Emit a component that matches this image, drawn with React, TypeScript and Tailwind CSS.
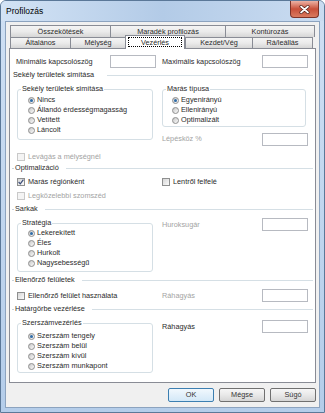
import React from "react";

const Radio = ({ label, checked = false }: { label: string; checked?: boolean }) => (
  <div className="flex h-[10px] items-center">
    <span className="flex h-[7px] w-[7px] shrink-0 items-center justify-center rounded-full border border-[#8e8e8e] bg-linear-to-br from-[#c6c6c6] to-[#fcfcfc]">
      {checked && <span className="h-[3px] w-[3px] rounded-full bg-[#2f6ca8]" />}
    </span>
    <span className="ml-[2px]">{label}</span>
  </div>
);

const Check = ({
  label,
  checked = false,
  disabled = false,
}: {
  label: string;
  checked?: boolean;
  disabled?: boolean;
}) => (
  <div className="flex h-[10px] items-center">
    <span
      className={`flex h-[8px] w-[8px] shrink-0 items-center justify-center border ${
        disabled
          ? "border-[#c9c9c9] bg-[#f4f4f4]"
          : "border-[#8e8f8f] bg-linear-to-br from-[#d6d6d6] to-[#fbfbfb]"
      }`}
    >
      {checked && (
        <svg width="6" height="6" viewBox="0 0 6 6">
          <path d="M0.6 3 L2.3 4.8 L5.4 0.7" fill="none" stroke="#3b4d78" strokeWidth="1.2" />
        </svg>
      )}
    </span>
    <span className={`ml-[3px] ${disabled ? "text-[#a3a3a3]" : ""}`}>{label}</span>
  </div>
);

const Section = ({ title, dash = true, gap = "ml-[6px]" }: { title: string; dash?: boolean; gap?: string }) => (
  <div className="flex h-[10px] items-center">
    {dash && <span className="h-px w-[2px] bg-[#c9d3da]" />}
    <span className="px-[1px]">{title}</span>
    <span className={`${gap} h-px flex-1 bg-[#d5dfe5]`} />
  </div>
);

const Group = ({
  title,
  className,
  inner,
  children,
}: {
  title: string;
  className: string;
  inner: string;
  children: React.ReactNode;
}) => (
  <fieldset className={`rounded-[3px] border border-[#d5dfe5] ${className}`}>
    <legend className="ml-[3px] px-[1px] leading-[10px]">{title}</legend>
    <div className={inner}>{children}</div>
  </fieldset>
);

const Field = () => (
  <input readOnly className="ml-auto block h-[13px] w-[46px] shrink-0 border border-[#b7bac1] bg-white" />
);

const Tab = ({ label, className }: { label: string; className: string }) => (
  <div
    className={`flex items-center justify-center border-l border-t border-[#898c95] bg-linear-to-b from-[#f4f4f4] via-[#ebebeb] to-[#d6d6d6] ${className}`}
  >
    {label}
  </div>
);

const Btn = ({ label, primary = false }: { label: string; primary?: boolean }) => (
  <button
    className={`h-[14px] w-[46px] rounded-[2px] border leading-[12px] text-[#333] ${
      primary
        ? "border-[#3c7fb1] bg-linear-to-b from-[#f1f8fd] to-[#d3e8f7]"
        : "border-[#707070] bg-linear-to-b from-[#f6f6f6] via-[#e9e9e9] to-[#d5d5d5]"
    }`}
  >
    {label}
  </button>
);

export default function App() {
  return (
    <div className="h-[413px] w-[325px] overflow-hidden bg-white">
      <div className="flex h-[413px] w-[325px] flex-col rounded-t-[6px] border border-[#5b7898] bg-linear-to-b from-[#cfe0f4] to-[#b4cdea] font-[family-name:'Liberation_Sans',Arial,sans-serif] text-[7.3px] leading-[10px] text-[#2b2b2b]">
        {/* title bar */}
        <div className="flex h-[20px] shrink-0 rounded-t-[5px] bg-linear-to-r from-[#d3e3f5] via-[#b3cbe7] to-[#cadcf1]">
          <span className="ml-[5px] mt-[5px] text-[8.5px] leading-[11px] text-black">Profilozás</span>
          <button className="ml-auto mr-[5px] flex h-[17px] w-[29px] items-center justify-center rounded-b-[4px] border border-t-0 border-[#7d3328] bg-linear-to-b from-[#ebb2a5] via-[#c84f39] to-[#d97a5f]">
            <svg width="11" height="9" viewBox="0 0 11 9">
              <path d="M2 1.5 L9 7.5 M9 1.5 L2 7.5" stroke="#4a1a12" strokeWidth="3" strokeLinecap="round" />
              <path d="M2 1.5 L9 7.5 M9 1.5 L2 7.5" stroke="#fff" strokeWidth="1.7" strokeLinecap="round" />
            </svg>
          </button>
        </div>

        {/* client */}
        <div className="mx-[4px] flex h-[387px] shrink-0 flex-col border border-[#8ca3bf] bg-[#f0f0f0]">
          <div className="ml-[3px] mt-[3px] w-[307px]">
            <div className="flex h-[12px] pl-[1px]">
              <Tab label="Összekötések" className="w-[100px]" />
              <Tab label="Maradék profilozás" className="w-[115px]" />
              <Tab label="Kontúrozás" className="w-[90px] border-r" />
            </div>
            <div className="flex h-[11px] pl-[1px]">
              <Tab label="Általános" className="w-[60px]" />
              <Tab label="Mélység" className="w-[55px]" />
              <div className="relative z-10 -mb-[1px] -mt-[2px] flex h-[14px] w-[60px] border-x border-t border-[#898c95] bg-white px-[2px] pb-[2px] pt-[1px]">
                <span className="flex flex-1 items-center justify-center border border-dotted border-black leading-[9px]">
                  Vezérlés
                </span>
              </div>
              <Tab label="Kezdet/Vég" className="w-[67px]" />
              <Tab label="Rá/leállás" className="w-[61px] border-r" />
            </div>

            {/* panel */}
            <div className="h-[335px] border border-[#898c95] bg-white px-[2px]">
              <div className="ml-[4px] mt-[6px] grid h-[12px] grid-cols-[140px_146px] gap-x-[6px]">
                <div className="flex items-center">
                  <span>Minimális kapcsolószög</span>
                  <Field />
                </div>
                <div className="flex items-center">
                  <span>Maximális kapcsolószög</span>
                  <Field />
                </div>
              </div>

              <div className="mt-[3px]">
                <Section title="Sekély területek simítása" dash={false} gap="ml-[12px]" />
              </div>

              <div className="ml-[4px] mt-[4px] grid grid-cols-[140px_146px] items-start gap-x-[6px]">
                <Group title="Sekély területek simítása" className="ml-[1px] w-[136px]" inner="pb-[4px] pl-[10px] pt-[1px]">
                  <Radio label="Nincs" checked />
                  <Radio label="Állandó érdességmagasság" />
                  <Radio label="Vetített" />
                  <Radio label="Láncolt" />
                </Group>
                <div>
                  <Group title="Marás típusa" className="w-[144px]" inner="pb-[1px] pl-[9px] pt-[1px]">
                    <Radio label="Egyenirányú" checked />
                    <Radio label="Ellenirányú" />
                    <Radio label="Optimalizált" />
                  </Group>
                  <div className="mt-[6px] flex h-[12px] items-center">
                    <span className="text-[#a3a3a3]">Lépésköz %</span>
                    <Field />
                  </div>
                </div>
              </div>

              <div className="ml-[5px] mt-[7px]">
                <Check label="Levágás a mélységnél" disabled />
              </div>

              <div className="mt-[1px]">
                <Section title="Optimalizáció" />
              </div>

              <div className="ml-[4px] mt-[4px] grid grid-cols-[140px_146px] gap-x-[6px]">
                <div className="ml-[1px]">
                  <Check label="Marás régiónként" checked />
                </div>
                <Check label="Lentről felfelé" />
              </div>

              <div className="ml-[5px] mt-[4px]">
                <Check label="Legközelebbi szomszéd" disabled />
              </div>

              <div className="mt-[3px]">
                <Section title="Sarkak" />
              </div>

              <div className="ml-[4px] mt-[4px] grid grid-cols-[140px_146px] items-start gap-x-[6px]">
                <Group title="Stratégia" className="ml-[1px] w-[136px]" inner="pb-[3px] pl-[10px]">
                  <Radio label="Lekerekített" checked />
                  <Radio label="Éles" />
                  <Radio label="Hurkolt" />
                  <Radio label="Nagysebességű" />
                </Group>
                <div className="flex h-[13px] items-center">
                  <span className="text-[#a3a3a3]">Huroksugár</span>
                  <Field />
                </div>
              </div>

              <div className="mt-[3px]">
                <Section title="Ellenőrző felületek" />
              </div>

              <div className="ml-[4px] mt-[4px] grid h-[13px] grid-cols-[140px_146px] items-center gap-x-[6px]">
                <div className="ml-[1px]">
                  <Check label="Ellenőrző felület használata" />
                </div>
                <div className="flex items-center">
                  <span className="text-[#a3a3a3]">Ráhagyás</span>
                  <Field />
                </div>
              </div>

              <div className="mt-[2px]">
                <Section title="Határgörbe vezérlése" />
              </div>

              <div className="ml-[4px] mt-[4px] grid grid-cols-[140px_146px] items-start gap-x-[6px]">
                <Group title="Szerszámvezérlés" className="ml-[1px] w-[136px]" inner="pb-[1px] pl-[10px] pt-[3px]">
                  <Radio label="Szerszám tengely" checked />
                  <Radio label="Szerszám belül" />
                  <Radio label="Szerszám kívül" />
                  <Radio label="Szerszám munkapont" />
                </Group>
                <div className="mt-[2px] flex h-[13px] items-center">
                  <span>Ráhagyás</span>
                  <Field />
                </div>
              </div>
            </div>
          </div>

          <div className="mr-[3px] mt-[5px] flex justify-end gap-[5px]">
            <Btn label="OK" primary />
            <Btn label="Mégse" />
            <Btn label="Súgó" />
          </div>
        </div>
      </div>
    </div>
  );
}
